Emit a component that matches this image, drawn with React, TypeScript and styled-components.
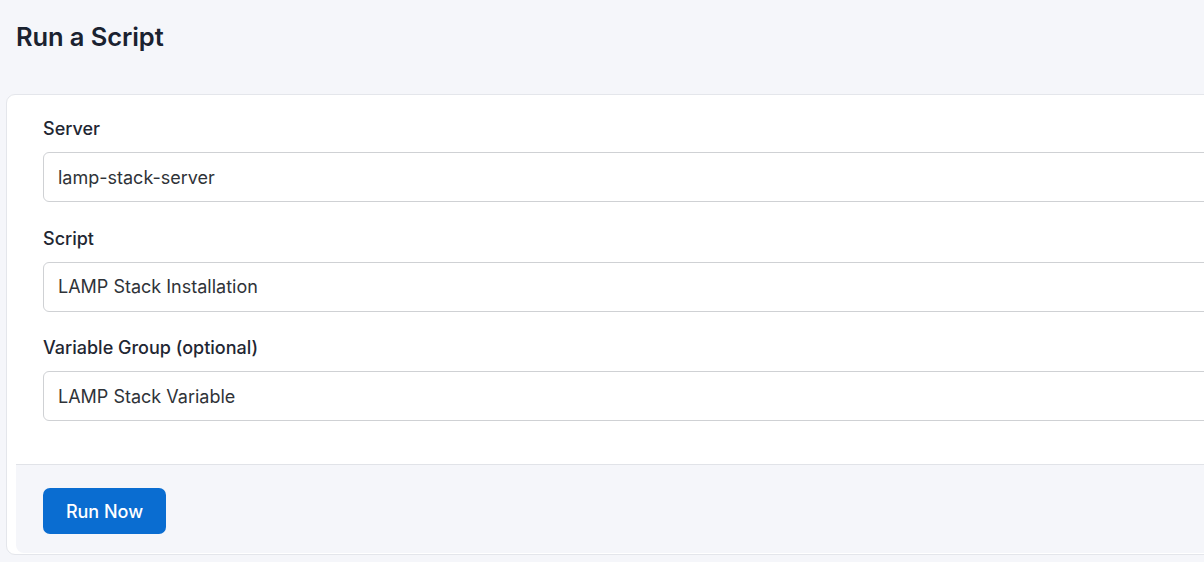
import styled, { createGlobalStyle } from "styled-components";

const GlobalStyle = createGlobalStyle`
  html, body {
    margin: 0;
    padding: 0;
    background: #f5f6fa;
    font-family: Inter, "Noto Sans", sans-serif;
    color: #1f2733;
    overflow: hidden;
  }
`;

const fields = [
  { label: "Server", value: "lamp-stack-server" },
  { label: "Script", value: "LAMP Stack Installation" },
  { label: "Variable Group (optional)", value: "LAMP Stack Variable" },
];

const Page = styled.div`
  width: 1204px;
  height: 562px;
  display: flex;
  flex-direction: column;
`;

const Title = styled.h1`
  margin: 0;
  padding: 20px 16px 0;
  height: 94px;
  flex-shrink: 0;
  box-sizing: border-box;
  font-size: 25.5px;
  line-height: 34px;
  font-weight: 600;
  color: #1a2230;
  letter-spacing: -0.1px;
`;

const Card = styled.section`
  margin-left: 6px;
  width: 1220px;
  height: 461px;
  flex-shrink: 0;
  box-sizing: border-box;
  background: #fff;
  border: 1px solid #e4e6eb;
  border-radius: 9px;
  padding: 0 0 1px 9px;
  display: flex;
  flex-direction: column;
`;

const Body = styled.div`
  flex: 1;
  padding: 22px 0 0 27px;
  display: flex;
  flex-direction: column;
  gap: 24.5px;
`;

const Field = styled.div`
  display: flex;
  flex-direction: column;
  gap: 11px;
`;

const Label = styled.label`
  font-size: 18px;
  font-weight: 500;
  line-height: 24px;
  color: #1f2733;
`;

const Input = styled.div`
  height: 50px;
  box-sizing: border-box;
  border: 1px solid #cfd1d4;
  border-radius: 6px;
  padding: 0 14px;
  display: flex;
  align-items: center;
  font-size: 18px;
  color: #2f3338;
`;

const Footer = styled.footer`
  height: 89px;
  flex-shrink: 0;
  box-sizing: border-box;
  background: #f5f6fa;
  border-top: 1px solid #e1e3e8;
  border-bottom-left-radius: 8px;
  padding: 23px 0 0 27px;
`;

const Button = styled.button`
  width: 123px;
  height: 46px;
  border: none;
  border-radius: 7px;
  background: #0a6dd1;
  color: #fff;
  font-family: Inter, "Noto Sans", sans-serif;
  font-size: 18px;
  font-weight: 500;
  cursor: pointer;
`;

export default function App() {
  return (
    <Page>
      <GlobalStyle />
      <Title>Run a Script</Title>
      <Card>
        <Body>
          {fields.map((field) => (
            <Field key={field.label}>
              <Label>{field.label}</Label>
              <Input>{field.value}</Input>
            </Field>
          ))}
        </Body>
        <Footer>
          <Button>Run Now</Button>
        </Footer>
      </Card>
    </Page>
  );
}
